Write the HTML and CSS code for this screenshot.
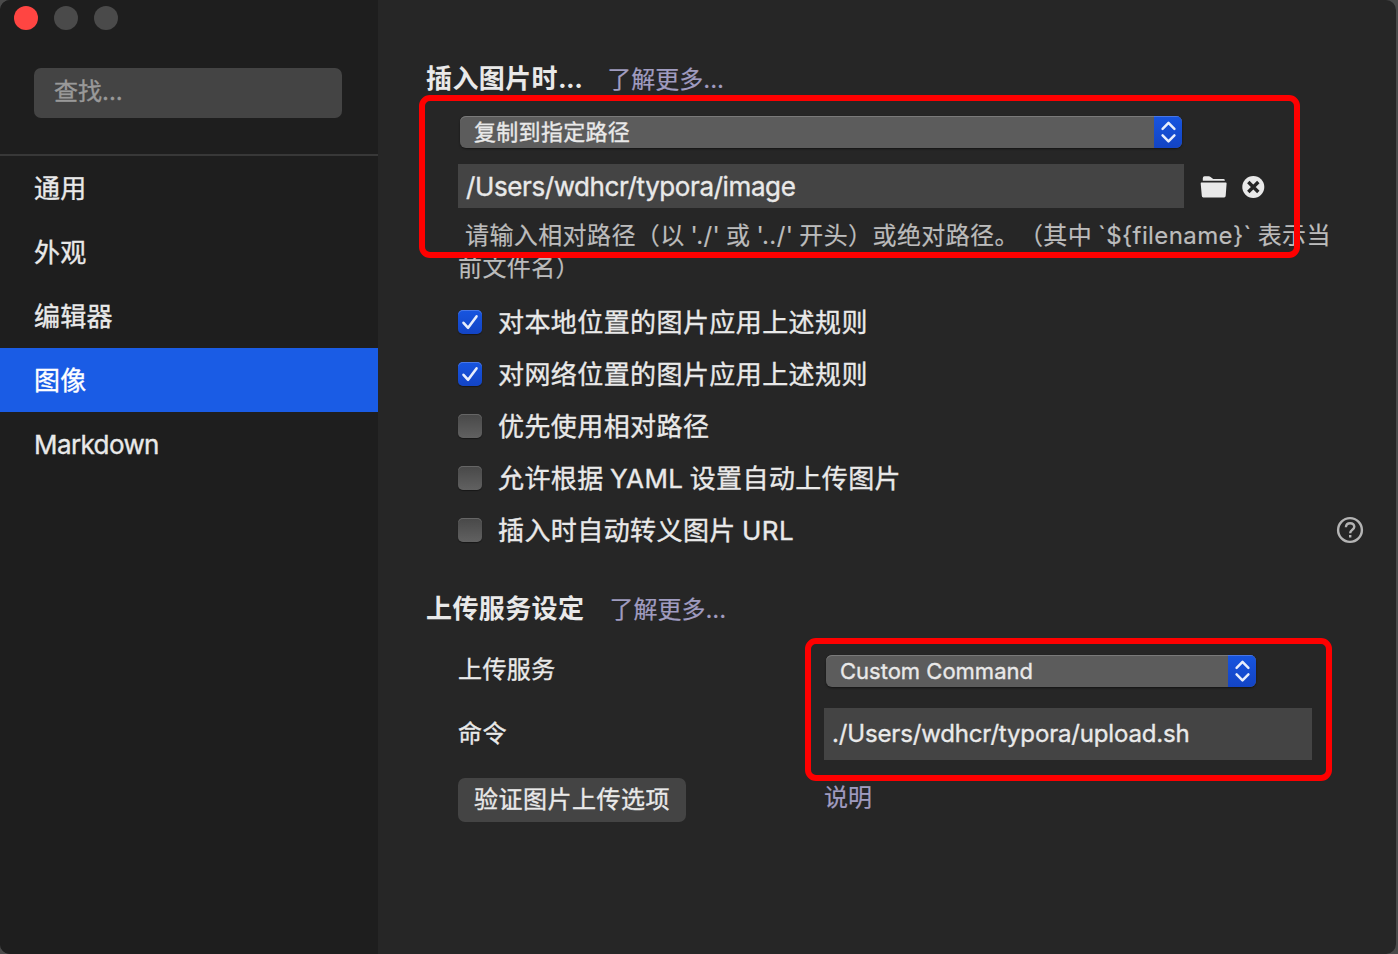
FILE: index.html
```
<!DOCTYPE html>
<html lang="zh-CN">
<head>
    <meta charset="UTF-8">
    <meta name="viewport" content="width=device-width, initial-scale=1.0">
    <title>偏好设置</title>
    <link rel="stylesheet" href="styles.css">
</head>
<body>
    <div class="window">
        <div class="side">
            <div class="dots">
                <span class="close"></span>
                <span></span>
                <span></span>
            </div>
            <div class="search">查找...</div>
            <ul class="menu">
                <li>通用</li>
                <li>外观</li>
                <li>编辑器</li>
                <li class="active">图像</li>
                <li class="en">Markdown</li>
            </ul>
        </div>
        <div class="main">
            <div class="title">
                <h2>插入图片时<span class="en">...</span></h2>
                <a class="more">了解更多...</a>
            </div>
            <div class="insert">
                <div class="select">
                    <span class="value">复制到指定路径</span>
                    <span class="arrow">
                        <svg width="28" height="32" viewBox="0 0 28 32"><path d="M8.6 12.8l5.9-5.9 5.9 5.9M8.6 19.4l5.9 5.9 5.9-5.9"/></svg>
                    </span>
                </div>
                <div class="path">
                    <div class="input">/Users/wdhcr/typora/image</div>
                    <svg class="folder" width="28" height="24" viewBox="0 0 28 24">
                        <path d="M2.8 5.700V3.200Q2.800 1.200 4.600 1.200h4.200q1 0 1.800.7l2.600 2h10.200q1.400 0 1.400 1.300v.5z"/>
                        <path d="M1.400 7.500h24.400q.9 0 .8 1l-.9 12.300q-.1 1.700-1.600 1.700H3.300q-1.400 0-1.500-1.700L.7 8.500q-.1-1 .7-1z"/>
                    </svg>
                    <svg class="clear" width="24" height="24" viewBox="0 0 24 24">
                        <circle cx="12.300" cy="12" r="11"/>
                        <path d="M7.300 7l10 10M17.300 7l-10 10"/>
                    </svg>
                </div>
                <p class="hint">请输入相对路径（以 './' 或 '../' 开头）或绝对路径。（其中 `${filename}` 表示当<br>前文件名）</p>
                <div class="mark"></div>
            </div>
            <ul class="options">
                <li><span class="check on"><svg width="24" height="24" viewBox="0 0 24 24"><path d="M5.5 12.8l4.6 5 8.4-11.4"/></svg></span>对本地位置的图片应用上述规则</li>
                <li><span class="check on"><svg width="24" height="24" viewBox="0 0 24 24"><path d="M5.5 12.8l4.6 5 8.4-11.4"/></svg></span>对网络位置的图片应用上述规则</li>
                <li><span class="check"></span>优先使用相对路径</li>
                <li><span class="check"></span>允许根据 YAML 设置自动上传图片</li>
                <li><span class="check"></span>插入时自动转义图片 URL
                    <svg class="help" width="28" height="28" viewBox="0 0 28 28">
                        <circle cx="14" cy="14" r="11.9"/>
                        <path d="M9.9 11.2q.2-4 4.2-4t4.2 3.600q0 1.700-2.200 3.200-1.900 1.300-1.900 3.300M14.200 19v2.600"/>
                    </svg>
                </li>
            </ul>
            <div class="title">
                <h2>上传服务设定</h2>
                <a class="more">了解更多...</a>
            </div>
            <div class="upload">
                <div class="labels">
                    <div class="label">上传服务</div>
                    <div class="label">命令</div>
                    <div class="button">验证图片上传选项</div>
                </div>
                <div class="fields">
                    <div class="select">
                        <span class="value">Custom Command</span>
                        <span class="arrow">
                            <svg width="28" height="32" viewBox="0 0 28 32"><path d="M8.6 12.8l5.9-5.9 5.9 5.9M8.6 19.4l5.9 5.9 5.9-5.9"/></svg>
                        </span>
                    </div>
                    <div class="input">./Users/wdhcr/typora/upload.sh</div>
                    <a class="more">说明</a>
                    <div class="mark"></div>
                </div>
            </div>
        </div>
    </div>
</body>
</html>
```
FILE: styles.css
```
*{
    margin: 0;
    padding: 0;
    box-sizing: border-box;
}
body{
    background: #4a4a4a;
    font-family: Inter, "Noto Sans CJK SC", sans-serif;
    color: #e9e9e9;
    overflow: hidden;
    text-spacing-trim: space-all;
    -webkit-text-stroke: .35px;
}
ul{
    list-style: none;
}
svg{
    display: block;
    flex: none;
}
.window{
    display: flex;
    width: 1396px;
    height: 954px;
    border-radius: 10px;
    overflow: hidden;
    background: #262626;
}
/* 左侧菜单 */
.side{
    width: 378px;
    flex: none;
    background: #1e1e1e;
}
.dots{
    display: flex;
    gap: 16px;
    padding: 6px 14px 0;
}
.dots span{
    width: 24px;
    height: 24px;
    border-radius: 50%;
    background: #4a4a4a;
}
.dots .close{
    background: #ff4542;
}
.search{
    height: 50px;
    margin: 38px 36px 36px 34px;
    padding-left: 20px;
    border-radius: 7px;
    background: #444;
    color: #999;
    font-size: 24px;
    line-height: 47px;
}
.menu{
    border-top: 2px solid #383838;
}
.menu li{
    height: 64px;
    padding-left: 34px;
    font-size: 26px;
    line-height: 65px;
    letter-spacing: .3px;
}
.menu .en{
    letter-spacing: -.6px;
}
.menu .active{
    background: #1a5ce5;
    color: #fff;
}
/* 右侧内容 */
.main{
    flex: 1;
    padding: 60px 0 0 48px;
}
.title{
    display: flex;
    align-items: center;
    height: 38px;
    gap: 26px;
}
.title h2{
    font-size: 26px;
    line-height: 38px;
    letter-spacing: .4px;
    -webkit-text-stroke-width: 0;
}
.title .en{
    letter-spacing: -.6px;
}
.more{
    color: #a09cc0;
    font-size: 24px;
    line-height: 40px;
    -webkit-text-stroke-width: .2px;
}
.title .more{
    margin: 2px 0 0 -1px;
}
.insert{
    position: relative;
    padding: 18px 0 0 32px;
}
.select{
    display: flex;
    width: 722px;
    height: 32px;
    margin-left: 2px;
    border-radius: 6px;
    overflow: hidden;
    background: #5c5c5c;
    box-shadow: inset 0 1px 0 #7a7a7a, 0 1px 2px rgba(0,0,0,.5);
}
.value{
    flex: 1;
    padding-left: 14px;
    font-size: 22px;
    line-height: 32px;
    letter-spacing: .3px;
}
.arrow{
    width: 28px;
    background: linear-gradient(#1755e0, #1344c4);
    box-shadow: inset 0 1px 0 #4877e6;
}
.arrow path{
    fill: none;
    stroke: #e8eefc;
    stroke-width: 2.5;
    stroke-linecap: round;
    stroke-linejoin: round;
}
.path{
    display: flex;
    align-items: center;
    margin-top: 16px;
}
.input{
    width: 726px;
    height: 44px;
    padding-left: 8px;
    background: #444;
    font-size: 26px;
    line-height: 46px;
    letter-spacing: -.4px;
    white-space: nowrap;
}
.folder{
    margin: 2px 0 0 16px;
    fill: #e9e9e9;
}
.clear{
    margin: 2px 0 0 13px;
    fill: #e9e9e9;
}
.clear path{
    stroke: #262626;
    stroke-width: 3.4;
}
.hint{
    margin-top: 12px;
    color: #bcbcbc;
    font-size: 24px;
    line-height: 32px;
    letter-spacing: .4px;
    word-spacing: -1.2px;
    text-indent: 7px;
    white-space: nowrap;
    -webkit-text-stroke-width: .2px;
}
/* 红色标注框 */
.mark{
    position: absolute;
    border: 6px solid #fe0000;
    border-radius: 11px;
}
.insert .mark{
    left: -7px;
    top: -3px;
    width: 881px;
    height: 163px;
}
.options{
    padding: 12px 0 0 32px;
}
.options li{
    display: flex;
    align-items: center;
    height: 52px;
    font-size: 26px;
    line-height: 54px;
    letter-spacing: .42px;
    word-spacing: -1.5px;
}
.check{
    width: 24px;
    height: 24px;
    margin-right: 16px;
    border-radius: 5px;
    background: linear-gradient(#484848, #616161);
    box-shadow: inset 0 1px 0 #666, 0 1px 1px rgba(0,0,0,.4);
}
.check.on{
    background: linear-gradient(#1755e0, #1344c4);
    box-shadow: inset 0 1px 0 #4877e6, 0 1px 1px rgba(0,0,0,.4);
}
.check path{
    fill: none;
    stroke: #e8eefc;
    stroke-width: 2.6;
    stroke-linecap: round;
    stroke-linejoin: round;
}
/* 文字下移1px */
.options li{
    padding-top: 1px;
}
.check, .help{
    position: relative;
    top: -1px;
}
.help{
    margin: 0 32px 0 auto;
    fill: none;
    stroke: #b4b4b4;
    stroke-width: 2.4;
}
.options + .title{
    margin-top: 34px;
}
.upload{
    display: flex;
    padding: 27px 0 0 32px;
}
.labels{
    width: 366px;
}
.label{
    height: 64px;
    font-size: 24px;
    line-height: 30px;
    letter-spacing: .4px;
}
.button{
    width: 228px;
    height: 44px;
    margin-top: -5px;
    border-radius: 7px;
    background: #444;
    font-size: 24px;
    line-height: 43px;
    letter-spacing: .5px;
    text-align: center;
}
.fields{
    position: relative;
}
.fields .select{
    width: 430px;
}
.fields .value{
    letter-spacing: 0;
}
.fields .input{
    width: 488px;
    height: 52px;
    margin: 21px 0 18px;
    font-size: 24px;
    line-height: 52px;
    letter-spacing: -.16px;
}
.fields .more{
    display: block;
}
.fields .mark{
    left: -19px;
    top: -17px;
    width: 527px;
    height: 143px;
}
```
